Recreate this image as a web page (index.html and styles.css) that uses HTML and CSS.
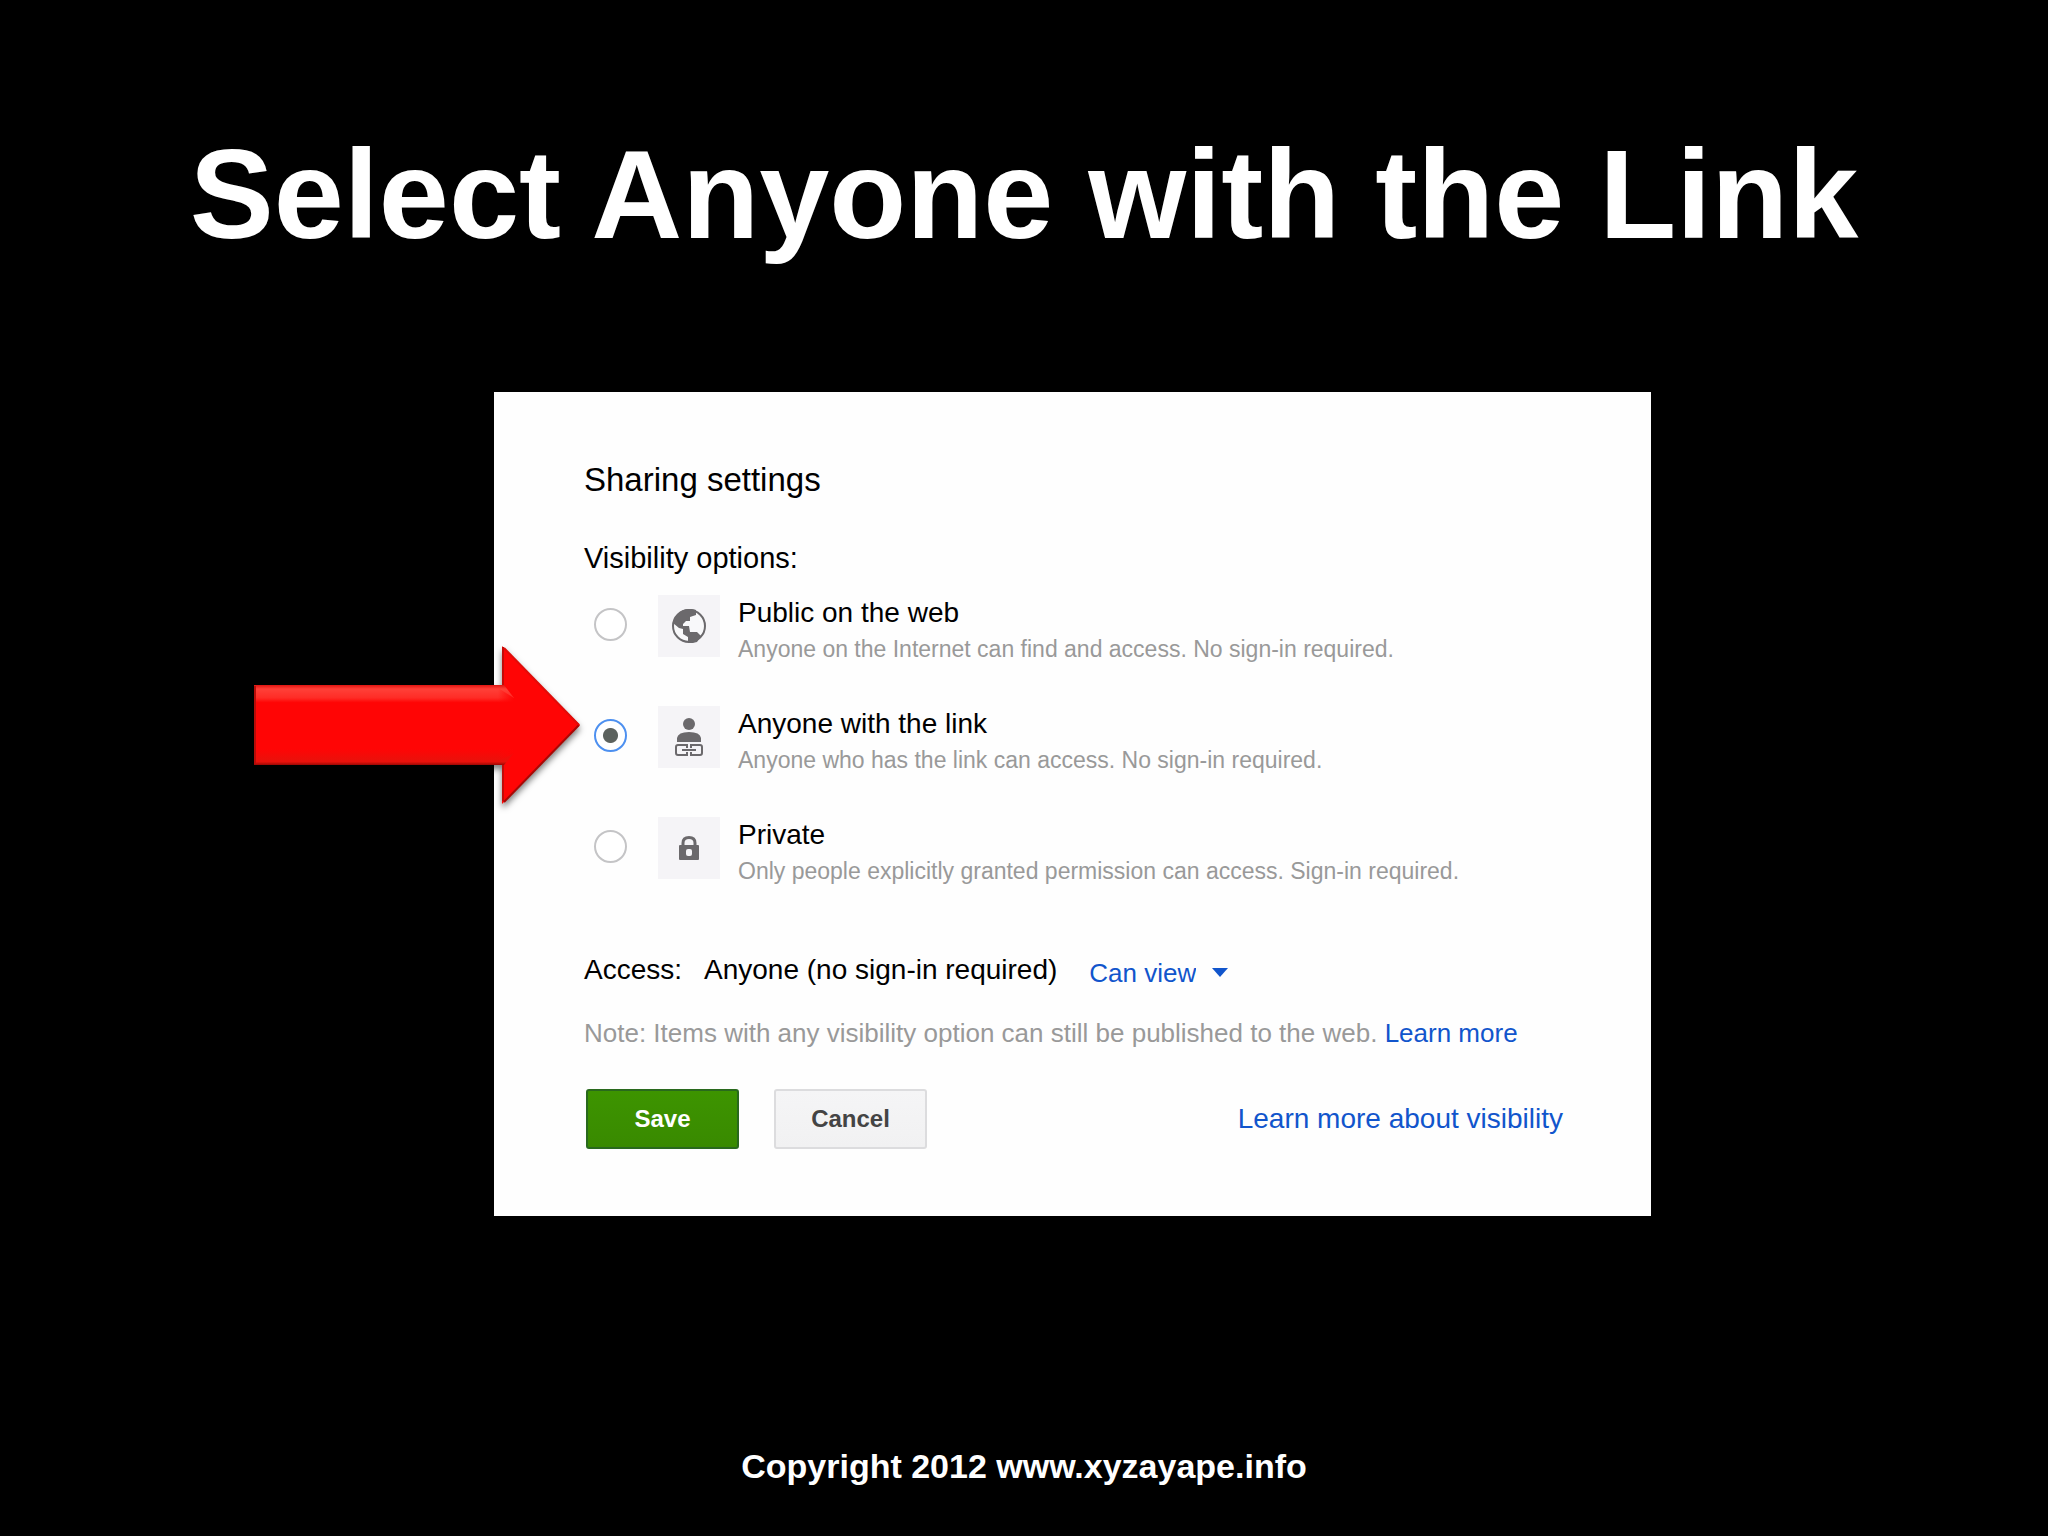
FILE: index.html
```html
<!DOCTYPE html>
<html lang="en">
<head>
<meta charset="utf-8">
<meta name="viewport" content="width=device-width, initial-scale=1">
<title>Select Anyone with the Link</title>
<link rel="stylesheet" href="styles.css">
</head>
<body>
<div class="slide">
  <h1 class="slide-title">Select Anyone with the Link</h1>
  <main class="stage">
    <form class="dialog">
      <h2 class="dialog-title">Sharing settings</h2>
      <fieldset class="options">
        <legend class="options-legend">Visibility options:</legend>
        <div class="option">
          <input class="radio" type="radio" name="visibility" id="public">
          <label class="option-label" for="public">
            <span class="option-icon">
              <svg width="36" height="36" viewBox="0 0 36 36" aria-hidden="true">
                <circle cx="18" cy="18" r="16" fill="#f8f8fa" stroke="#6b696c" stroke-width="2"/>
                <path fill="#6b696c" d="M2 15C4 7 10 1 18 1c3 0 5 0 7 1v5l-6 2v4h-4l-3 3v2h6l1 6h7l4 4-4 6c-3 1-6 1-9 1v-6l-5-3v-5l-4-1z"/>
              </svg>
            </span>
            <span class="option-text">
              <span class="option-name">Public on the web</span>
              <span class="option-note">Anyone on the Internet can find and access. No sign-in required.</span>
            </span>
          </label>
        </div>
        <div class="option">
          <input class="radio" type="radio" name="visibility" id="link" checked>
          <label class="option-label" for="link">
            <span class="option-icon">
              <svg width="36" height="40" viewBox="0 0 36 40" aria-hidden="true">
                <g fill="#6b696c">
                  <circle cx="18" cy="7" r="6"/>
                  <path d="M6 25v-4q1-6 12-6t12 6v4z"/>
                </g>
                <g fill="none" stroke="#6b696c" stroke-width="2">
                  <path d="M16 31v-3H7q-2 0-2 2v6q0 2 2 2h9v-3M20 31v-3h9q2 0 2 2v6q0 2-2 2h-9v-3M11 33h14"/>
                </g>
              </svg>
            </span>
            <span class="option-text">
              <span class="option-name">Anyone with the link</span>
              <span class="option-note">Anyone who has the link can access. No sign-in required.</span>
            </span>
          </label>
        </div>
        <div class="option">
          <input class="radio" type="radio" name="visibility" id="private">
          <label class="option-label" for="private">
            <span class="option-icon">
              <svg width="20" height="24" viewBox="0 0 20 24" aria-hidden="true">
                <path d="M4 10V7q0-5.500 6-5.500T16 7v3" fill="none" stroke="#6b696c" stroke-width="3"/>
                <path d="M1 9h18q1 0 1 1v13q0 1-1 1H1q-1 0-1-1V10q0-1 1-1z" fill="#6b696c"/>
                <rect x="7" y="13" width="6" height="7" rx="2" fill="#f5f4f7"/>
              </svg>
            </span>
            <span class="option-text">
              <span class="option-name">Private</span>
              <span class="option-note">Only people explicitly granted permission can access. Sign-in required.</span>
            </span>
          </label>
        </div>
      </fieldset>
      <div class="access">
        <label class="access-label" for="permission"><span>Access:</span><span>Anyone (no sign-in required)</span></label>
        <span class="permission">
          <select class="permission-select" id="permission">
            <option>Can view</option>
          </select>
          <svg class="caret" width="16" height="9" viewBox="0 0 16 9" aria-hidden="true"><path d="M0 0h16L8 9z" fill="#1155cc"/></svg>
        </span>
      </div>
      <p class="note">Note: Items with any visibility option can still be published to the web. <a class="link" href="#">Learn more</a></p>
      <div class="actions">
        <button class="button button-save" type="submit">Save</button>
        <button class="button button-cancel" type="button">Cancel</button>
        <a class="link link-help" href="#">Learn more about visibility</a>
      </div>
      <svg class="arrow" width="336" height="170" viewBox="0 0 336 170" aria-hidden="true">
        <defs>
          <linearGradient id="shaft" x1="0" y1="0" x2="0" y2="1">
            <stop offset="0" stop-color="#e01410"/>
            <stop offset="0.050" stop-color="#ff4038"/>
            <stop offset="0.160" stop-color="#ff2c26"/>
            <stop offset="0.220" stop-color="#ff0505"/>
            <stop offset="0.800" stop-color="#ff0505"/>
            <stop offset="0.960" stop-color="#e8120c"/>
            <stop offset="1" stop-color="#9c0704"/>
          </linearGradient>
          <linearGradient id="head" x1="0" y1="0" x2="1" y2="0">
            <stop offset="0" stop-color="#ff0505" stop-opacity="0"/>
            <stop offset="1" stop-color="#ff0505"/>
          </linearGradient>
          <filter id="shadow" x="-10%" y="-10%" width="120%" height="125%" color-interpolation-filters="sRGB">
            <feDropShadow dx="0" dy="4" stdDeviation="3" flood-color="#000" flood-opacity="0.500"/>
          </filter>
        </defs>
        <g filter="url(#shadow)">
          <path d="M0 39h248V0l78 79-78 79v-39H0z" fill="#ff0505"/>
          <path d="M0 39h250l10 13v55l-10 12H0z" fill="url(#shaft)"/>
          <path d="M244 42l16 10v55l-16 8z" fill="url(#head)"/>
          <path d="M1 40v78" stroke="#b80c08" stroke-width="2"/>
          <path d="M249 1v38M249 119v36" stroke="#c40a07" stroke-width="2"/>
          <path d="M250 156l75-77" stroke="#a80805" stroke-width="2"/>
          <path d="M250 2l75 77" stroke="#e00c08" stroke-width="2"/>
        </g>
      </svg>
    </form>
  </main>
  <footer class="slide-footer">Copyright 2012 www.xyzayape.info</footer>
</div>
</body>
</html>
```
FILE: styles.css
```css
* {
  box-sizing: border-box;
}

body {
  margin: 0;
  background: #000;
  color: #000;
  font-family: "Liberation Sans", Arial, sans-serif;
}

.slide {
  display: flex;
  flex-direction: column;
  min-height: 100vh;
  padding: 123px 0 46px;
}

.slide-title {
  margin: 0 0 125px;
  color: #fff;
  font-family: "Arial Rounded MT Bold", "Liberation Sans", Arial, sans-serif;
  font-size: 126px;
  font-weight: 700;
  line-height: 144px;
  text-align: center;
}

.stage {
  display: grid;
  grid-template-columns: 494fr 1157fr 397fr;
}

.dialog {
  position: relative;
  grid-column: 2;
  padding: 68px 88px 67px 90px;
  background: #fefefe;
}

.dialog-title {
  margin: 0 0 40px;
  font-size: 33px;
  font-weight: 400;
  line-height: 40px;
}

.options {
  display: flex;
  flex-direction: column;
  gap: 43px;
  margin: 0 0 66px;
  padding: 0;
  border: 0;
}

.options-legend {
  margin-bottom: 19px;
  padding: 0;
  font-size: 29px;
  line-height: 36px;
}

.option {
  display: flex;
  align-items: flex-start;
  gap: 31px;
  padding-left: 10px;
}

.radio {
  appearance: none;
  flex: none;
  width: 33px;
  height: 33px;
  margin: 13px 0 0;
  border: 2px solid #c4c4c6;
  border-radius: 50%;
  background: #fff;
}

.radio:checked {
  border-color: #4d90f0;
  background: radial-gradient(circle, #5c625e 7px, #fff 8px);
}

.option-label {
  display: flex;
  align-items: flex-start;
  gap: 18px;
}

.option-icon {
  display: flex;
  flex: none;
  align-items: center;
  justify-content: center;
  width: 62px;
  height: 62px;
  background: #f5f4f7;
}

.option-text {
  display: flex;
  flex-direction: column;
  gap: 4px;
}

.option-name {
  font-size: 28px;
  line-height: 36px;
}

.option-note {
  color: #999;
  font-size: 23px;
  line-height: 28px;
}

.access {
  display: flex;
  align-items: flex-start;
  gap: 32px;
  margin-bottom: 22px;
}

.access-label {
  display: flex;
  gap: 22px;
  font-size: 28px;
  line-height: 38px;
}

.permission {
  position: relative;
}

.permission-select {
  appearance: none;
  display: block;
  height: 44px;
  padding: 0 32px 0 0;
  border: 0;
  background: transparent;
  color: #1155cc;
  font-family: inherit;
  font-size: 26px;
  line-height: 44px;
}

.caret {
  position: absolute;
  top: 17px;
  right: 0;
  pointer-events: none;
}

.note {
  margin: 0 0 40px;
  color: #999;
  font-size: 26px;
  line-height: 32px;
}

.link {
  color: #1155cc;
  text-decoration: none;
}

.actions {
  display: flex;
  align-items: center;
  gap: 35px;
  padding-left: 2px;
}

.button {
  width: 153px;
  height: 60px;
  padding: 0;
  border: 2px solid;
  border-radius: 3px;
  font-family: inherit;
  font-size: 24px;
  font-weight: 700;
}

.button-save {
  border-color: #29691d;
  background: linear-gradient(#3d9400, #398a00);
  color: #fff;
}

.button-cancel {
  border-color: #dcdcde;
  background: linear-gradient(#f5f5f6, #f1f1f2);
  color: #444;
}

.link-help {
  margin-left: auto;
  font-size: 28px;
}

.arrow {
  position: absolute;
  top: 254px;
  left: -240px;
  overflow: visible;
  pointer-events: none;
}

.slide-footer {
  margin-top: auto;
  color: #fff;
  font-family: "Arial Rounded MT Bold", "Liberation Sans", Arial, sans-serif;
  font-size: 34px;
  font-weight: 700;
  line-height: 48px;
  text-align: center;
}
```
